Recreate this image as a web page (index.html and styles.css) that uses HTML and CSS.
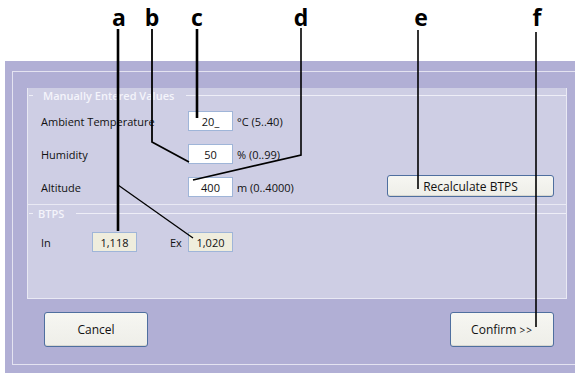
FILE: index.html
```html
<!DOCTYPE html>
<html lang="en">
<head>
    <meta charset="UTF-8">
    <meta name="viewport" content="width=device-width, initial-scale=1.0">
    <title>BTPS Settings</title>
    <link rel="stylesheet" href="styles.css">
</head>
<body>
    <div class="page">
        <div class="callout-space"></div>

        <div class="panel">
            <div class="frame">
                <div class="groups">
                    <section class="group group-manual">
                        <div class="group-title">
                            <span class="tick"></span>
                            <span class="title-text">Manually Entered Values</span>
                            <span class="rule"></span>
                        </div>
                        <div class="rows">
                            <div class="row">
                                <span class="label">Ambient Temperature</span>
                                <span class="field">20_</span>
                                <span class="unit">°C (5..40)</span>
                            </div>
                            <div class="row">
                                <span class="label">Humidity</span>
                                <span class="field">50</span>
                                <span class="unit">% (0..99)</span>
                            </div>
                            <div class="row">
                                <span class="label">Altitude</span>
                                <span class="field">400</span>
                                <span class="unit">m (0..4000)</span>
                                <button class="btn btn-recalc">Recalculate BTPS</button>
                            </div>
                        </div>
                    </section>

                    <section class="group group-btps">
                        <div class="group-title">
                            <span class="tick"></span>
                            <span class="title-text">BTPS</span>
                            <span class="rule"></span>
                        </div>
                        <div class="row btps-row">
                            <span class="label label-in">In</span>
                            <span class="field field-ro">1,118</span>
                            <span class="label label-ex">Ex</span>
                            <span class="field field-ro">1,020</span>
                        </div>
                    </section>
                </div>

                <div class="actions">
                    <button class="btn btn-big">Cancel</button>
                    <button class="btn btn-big">Confirm <span class="arrows">&gt;&gt;</span></button>
                </div>
            </div>
        </div>

        <!-- callout letters and leader lines -->
        <svg class="callouts" width="575" height="375" viewBox="0 0 575 375">
            <g class="letters">
                <text x="119" y="26">a</text>
                <text x="152" y="26">b</text>
                <text x="197" y="26">c</text>
                <text x="301" y="26">d</text>
                <text x="421" y="26">e</text>
                <text x="537" y="26">f</text>
            </g>
            <g fill="none" stroke="#000">
                <path d="M118 29 V231" stroke-width="2.6"/>
                <path d="M118 185 L193 238" stroke-width="1.3"/>
                <path d="M152 29 V142 L189 162" stroke-width="1.8"/>
                <path d="M197 29 V118" stroke-width="2.6"/>
                <path d="M301 28 V155 L193 180" stroke-width="1.6"/>
                <path d="M418 30 V189" stroke-width="1.6"/>
                <path d="M536 32 V327" stroke-width="1.6"/>
            </g>
        </svg>
    </div>
</body>
</html>
```

FILE: styles.css
```css
html, body {
    margin: 0;
    overflow: hidden;
    background-color: #fff;
}

body {
    font-family: 'Open Sans', 'Noto Sans', sans-serif;
    font-size: 11px;
    color: #111;
}

.page {
    position: relative;
    width: 575px;
    height: 375px;
}

.callout-space {
    height: 61px;
}

.panel {
    margin-left: 5px;
    width: 570px;
    box-sizing: border-box;
    padding: 10px 0 8px 7px;
    background-color: #b1afd5;
}

.frame {
    border: 1px solid #e4e3f1;
    border-right: none;
    padding: 16px 0 17px 14px;
}

.groups {
    width: 540px;
}

.group {
    background-color: #cecee4;
    border: 1px solid #e9e9f4;
    border-top: none;
}

.group-btps {
    padding-top: 1px;
    height: 94px;
    box-sizing: border-box;
}

.group-title {
    display: flex;
    align-items: center;
    height: 15px;
}

.tick, .rule {
    height: 1px;
    background-color: #eeeef7;
}

.tick {
    width: 4px;
    margin-left: 1px;
}

.rule {
    flex: 1;
    margin-left: 12px;
}

.title-text {
    margin-left: 10px;
    font-size: 11px;
    font-weight: 600;
    color: #f4f4fb;
}

.group-btps .title-text {
    margin-left: 5px;
}

.rows {
    display: flex;
    flex-direction: column;
    gap: 13px;
    padding: 8px 0 7px;
}

.row {
    display: flex;
    align-items: center;
    height: 20px;
}

.label {
    width: 160px;
    padding-left: 13px;
    box-sizing: border-box;
}

.field {
    width: 45px;
    height: 20px;
    box-sizing: border-box;
    border: 1px solid #9fb5d8;
    background-color: #fff;
    display: flex;
    align-items: center;
    justify-content: center;
}

.unit {
    margin-left: 4px;
}

.btps-row {
    margin-top: 11px;
}

.label-in {
    width: 64px;
}

.label-ex {
    width: 18px;
    margin-left: 33px;
    padding-left: 0;
}

.field-ro {
    background-color: #efeddd;
}

.btn {
    font-family: inherit;
    font-size: 12px;
    color: #111;
    background: linear-gradient(#f6f6f2, #eeeee8);
    border: 1px solid #4f6f9f;
    border-radius: 3px;
    padding: 0;
    box-shadow: inset 0 -1px 0 #d8d8d0;
}

.btn-recalc {
    align-self: flex-end;
    width: 167px;
    height: 22px;
    margin-left: auto;
    margin-right: 12px;
}

.actions {
    width: 540px;
    display: flex;
    justify-content: space-between;
    padding: 13px 13px 0 17px;
    box-sizing: border-box;
}

.btn-big {
    width: 104px;
    height: 35px;
}

.arrows {
    font-size: 10px;
    letter-spacing: 1px;
}

.callouts {
    position: absolute;
    top: 0;
    left: 0;
    pointer-events: none;
}

.letters text {
    font-family: 'Open Sans', sans-serif;
    font-weight: 700;
    font-size: 23px;
    text-anchor: middle;
    fill: #000;
}
```
